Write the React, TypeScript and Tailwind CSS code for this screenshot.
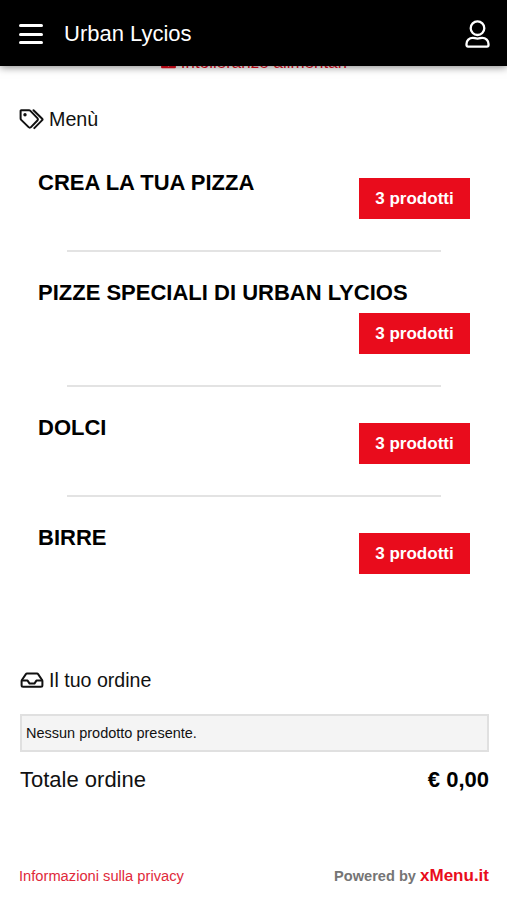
import React from 'react';
import { FaExclamationTriangle } from 'react-icons/fa';

const categories = [
  { name: 'CREA LA TUA PIZZA', count: 3 },
  { name: 'PIZZE SPECIALI DI URBAN LYCIOS', count: 3 },
  { name: 'DOLCI', count: 3 },
  { name: 'BIRRE', count: 3 },
];

const UserIcon = () => (
  <svg className="h-7 w-[25px] shrink-0" viewBox="0 0 25 28" fill="none" stroke="currentColor" strokeWidth="2.3" strokeLinejoin="round">
    <circle cx="12.500" cy="8.200" r="6.800" />
    <path d="M7.800 17.800c1.700 0 2.400.8 4.700.8s3-.8 4.700-.8c3.600 0 6.300 2.800 6.300 6.200v1.100c0 .9-.6 1.500-1.500 1.500H3c-.9 0-1.500-.6-1.500-1.500V24c0-3.400 2.700-6.200 6.300-6.200z" />
  </svg>
);

const TagsIcon = () => (
  <svg className="w-[26px] h-[22px] shrink-0" viewBox="0 0 26 22" fill="none" stroke="currentColor" strokeWidth="2" strokeLinejoin="round" strokeLinecap="round">
    <path d="M2.200 1.300h7.800c.6 0 1 .2 1.400.6l7 7.200c.7.700.7 1.700 0 2.400l-6.400 6.600c-.7.700-1.700.7-2.400 0l-7.400-7.200c-.4-.4-.6-.9-.6-1.400V2c0-.4.300-.7.600-.7z" />
    <path d="M14.500 1.300l8.700 8.500c.4.400.4.900 0 1.300l-7.900 8" />
    <circle cx="6" cy="5.800" r="1.700" fill="currentColor" stroke="none" />
  </svg>
);

const InboxIcon = () => (
  <svg className="w-[24px] h-[18px] shrink-0" viewBox="0 0 24 18" fill="none" stroke="currentColor" strokeWidth="2" strokeLinejoin="round">
    <path d="M7 1.500h10c.5 0 .8.200 1.100.6l4 5.900c.2.300.3.600.3 1v4.300c0 .9-.6 1.500-1.500 1.500H3.100c-.9 0-1.500-.6-1.500-1.500V9c0-.4.100-.7.300-1l4-5.900C6.200 1.700 6.500 1.500 7 1.500z" />
    <path d="M2.100 8.600h5.500l2 3h4.800l2-3h5.500" />
  </svg>
);

const Header = () => (
  <header className="relative z-10 flex h-[66px] items-center bg-black pl-[19px] pr-[17px] pt-[2px] text-white shadow-[0_1px_8px_rgba(0,0,0,0.5)]">
    <button className="flex w-6 flex-col gap-[5.500px]" aria-label="Menu">
      <span className="h-[3px] w-full rounded-xs bg-white" />
      <span className="h-[3px] w-full rounded-xs bg-white" />
      <span className="h-[3px] w-full rounded-xs bg-white" />
    </button>
    <h1 className="ml-[21px] flex-1 text-[22px] leading-none">Urban Lycios</h1>
    <UserIcon />
  </header>
);

export default function App() {
  return (
    <div className="min-h-[900px] bg-white font-['Liberation_Sans',Arial,sans-serif] text-[#111]">
      <Header />

      {/* allergen link, scrolled under the header */}
      <a className="-mt-[15px] flex h-5 items-center justify-center gap-[5px] pl-px text-[17px] text-[#e90c1c]">
        <FaExclamationTriangle className="size-[15px]" />
        <span className="pt-[3px]">Intolleranze alimentari</span>
      </a>

      <main className="pr-[18px] pl-5">
        <h2 className="-ml-px mt-[38px] flex h-[22px] items-center gap-1 text-[19.700px]">
          <TagsIcon />
          Menù
        </h2>

        <div className="mt-[39px] pr-[19px] pl-[18px]">
          {categories.map((category, index) => (
            <div key={category.name}>
              {index > 0 && <hr className="mx-[29px] mt-[31px] mb-7 border-t-2 border-[#e3e3e3]" />}
              <div className="flex flex-wrap items-start justify-between">
                <h3 className="h-[25px] text-[22px] leading-[26px] font-bold text-black">{category.name}</h3>
                <button className="mt-2 ml-auto h-[41px] w-[111px] bg-[#e90c1c] text-[17px] font-bold text-white">
                  {category.count} prodotti
                </button>
              </div>
            </div>
          ))}
        </div>

        <h2 className="-ml-px mt-[96px] flex h-[22px] items-center gap-[5px] pl-px text-[19.600px]">
          <InboxIcon />
          Il tuo ordine
        </h2>
        <div className="mt-[22px] flex h-[38px] items-center border-2 border-[#e0e0e0] bg-[#f4f4f4] px-1 pt-px text-[14.500px]">
          Nessun prodotto presente.
        </div>
        <div className="mt-[15px] flex items-center justify-between text-[22px] leading-[26px]">
          <span>Totale ordine</span>
          <span className="font-bold text-black">€ 0,00</span>
        </div>

        <footer className="-ml-px mt-[73px] flex items-baseline justify-between leading-5">
          <a className="text-[14.700px] text-[#e0293a]">Informazioni sulla privacy</a>
          <p className="text-[14.600px] font-bold text-[#757575]">
            Powered by <span className="text-[17px] text-[#e90c1c]">xMenu.it</span>
          </p>
        </footer>
      </main>
    </div>
  );
}
